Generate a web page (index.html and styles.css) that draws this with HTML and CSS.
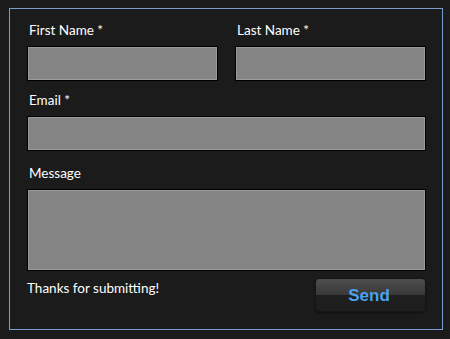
FILE: index.html
```html
<!DOCTYPE html>
<html>
<head>
<meta charset="utf-8">
<link rel="stylesheet" href="styles.css">
</head>
<body>
<form class="panel">
  <div class="row">
    <div class="field">
      <label class="label">First Name *</label>
      <div class="input"></div>
    </div>
    <div class="field">
      <label class="label">Last Name *</label>
      <div class="input"></div>
    </div>
  </div>
  <div class="field email">
    <label class="label">Email *</label>
    <div class="input"></div>
  </div>
  <div class="field message">
    <label class="label">Message</label>
    <div class="input textarea"></div>
  </div>
  <div class="footer">
    <span class="thanks">Thanks for submitting!</span>
    <button type="button" class="send"><span>Send</span></button>
  </div>
</form>
</body>
</html>
```

FILE: styles.css
```css
html, body {
  margin: 0;
  padding: 0;
  background: #1b1b1b;
}
body {
  padding: 8px 7px 9px 9px;
  font-family: Lato, "Open Sans", sans-serif;
  color: #fff;
}
.panel {
  box-sizing: border-box;
  width: 434px;
  height: 322px;
  border: 1px solid #7f9cd0;
  padding: 13px 16px 0 17px;
  display: flex;
  flex-direction: column;
}
.row {
  display: flex;
  gap: 17px;
}
.row .field {
  flex: 1;
}
.field {
  display: flex;
  flex-direction: column;
}
.email {
  margin-top: 11px;
}
.message {
  margin-top: 14px;
}
.label {
  font-size: 13.5px;
  line-height: 17px;
  padding-left: 2px;
  margin-bottom: 7px;
}
.input {
  box-sizing: border-box;
  height: 35px;
  border: 1px solid #000;
  background: #848484;
  box-shadow: inset 0 0 0 1px #9b9b9b;
}
.textarea {
  height: 82px;
}
.footer {
  display: flex;
  justify-content: space-between;
  align-items: flex-start;
  margin-top: 7px;
}
.thanks {
  font-size: 13.5px;
  line-height: 17px;
  margin-top: 2px;
}
.send {
  box-sizing: border-box;
  width: 111px;
  height: 34px;
  border: 1px solid #161616;
  border-radius: 4px;
  background: linear-gradient(#4e4e4e 0%, #383838 50%, #1e1e1e 50%, #1e1e1e 100%);
  box-shadow: 0 1px 2px rgba(0,0,0,0.5);
  padding: 0 0 0 0;
  font-family: "Liberation Sans", Arial, sans-serif;
  font-weight: bold;
  font-size: 17px;
  color: #4aa2f0;
  display: flex;
  align-items: center;
  justify-content: center;
  cursor: pointer;
}
.send span {
  margin-right: 3px;
  margin-top: 1px;
}
```
